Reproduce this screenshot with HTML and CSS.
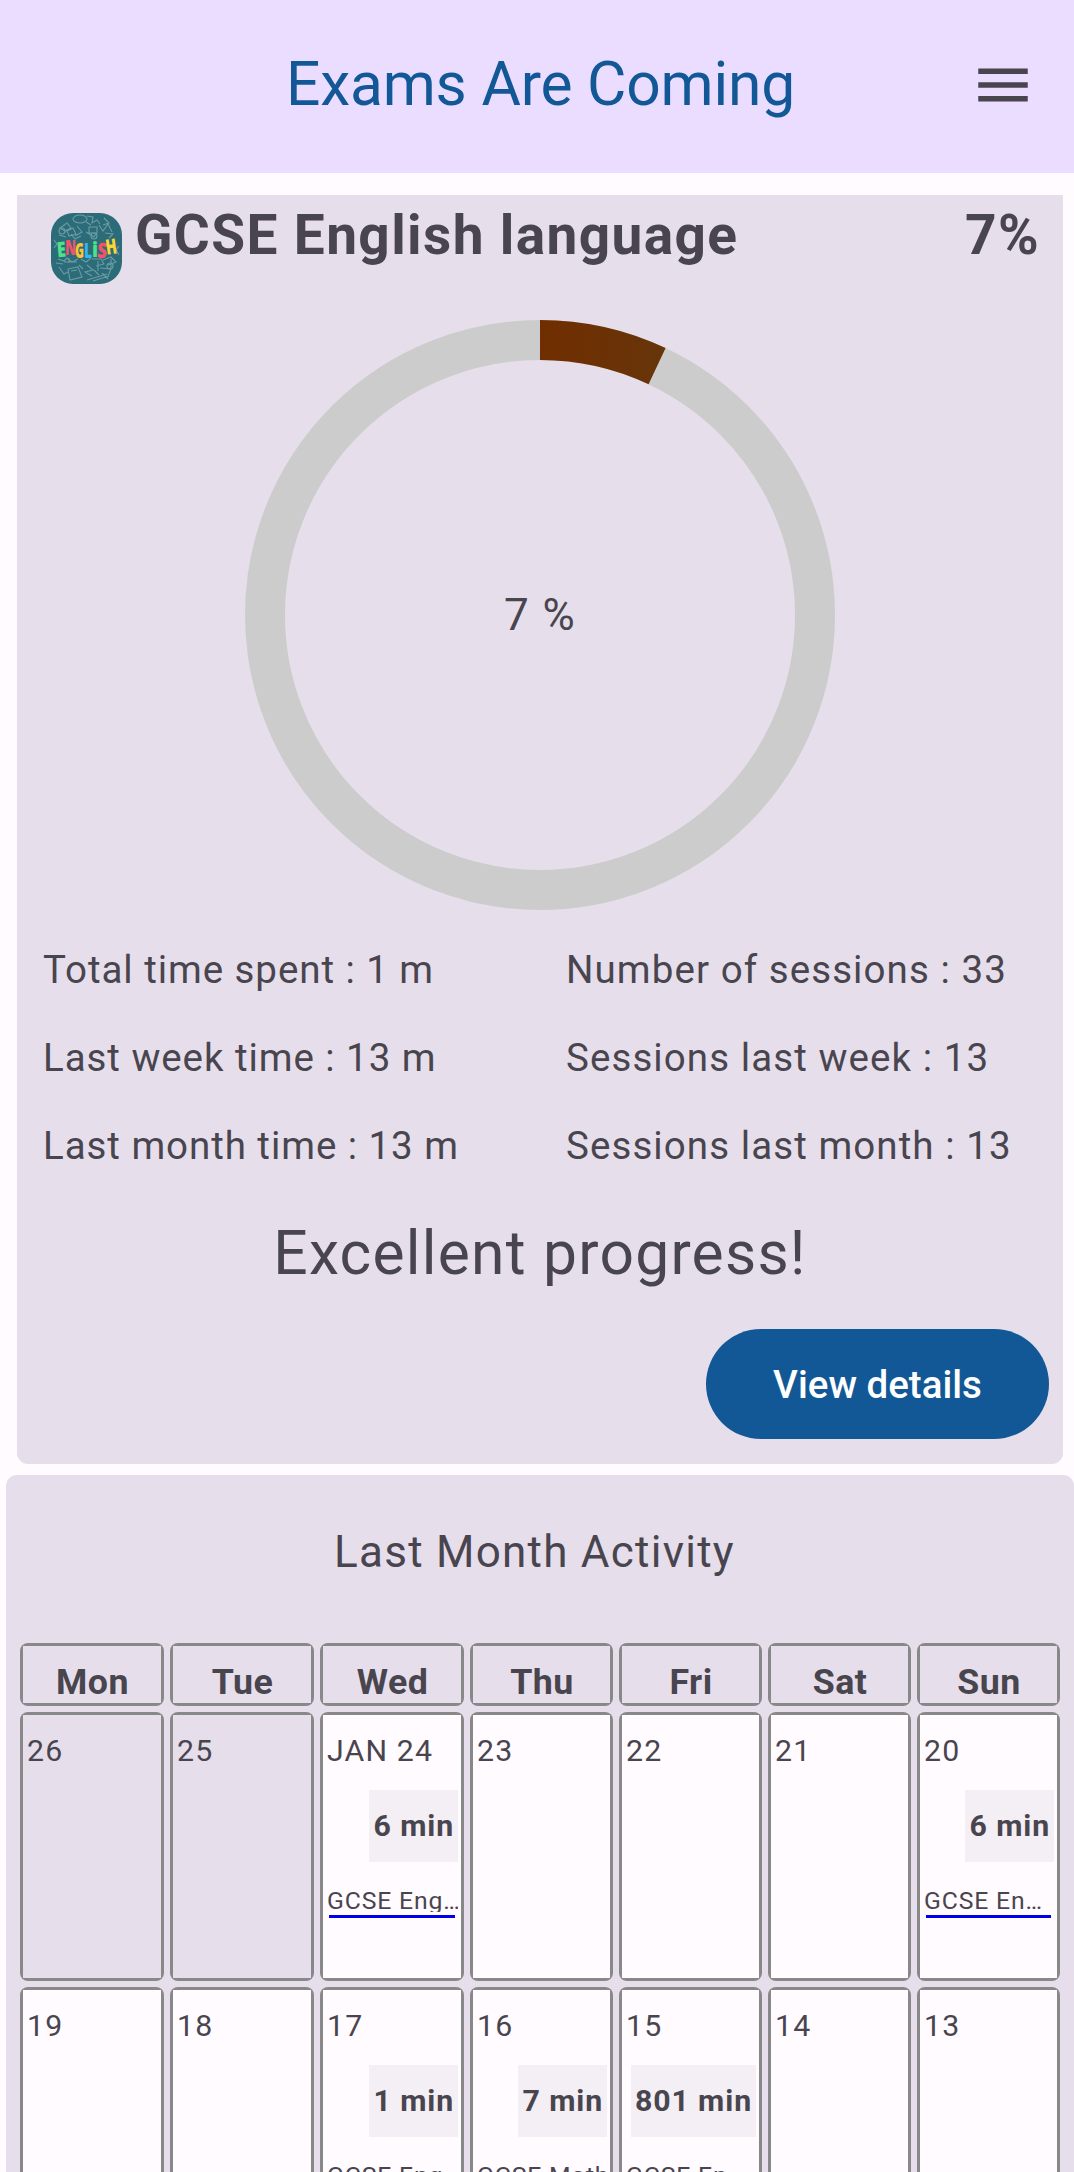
FILE: index.html
```html
<!DOCTYPE html>
<html lang="en">
<head>
  <title>Exams Are Coming</title>
  <meta charset="UTF-8">
  <link rel="stylesheet" href="styles.css">
</head>
<body>
  <header class="app-bar">
    <h1>Exams Are Coming</h1>
    <svg class="menu-icon" viewBox="0 0 24 24"><path d="M3 18h18v-2H3v2zm0-5h18v-2H3v2zm0-7v2h18V6H3z"/></svg>
  </header>

  <section class="card progress-card">
    <div class="subject-row">
      <svg class="subject-icon" viewBox="0 0 71 71">
        <rect width="71" height="71" rx="22" fill="#2b6c78"/>
        <!-- chalk doodles -->
        <g class="doodles">
          <ellipse cx="29" cy="6" rx="7" ry="4"/>
          <path d="M35 9l5 3M9 15l7-5 4 5-6 3zM16 18l6-3 3 6-7 2zM26 13l5 6-7 4M36 3l6 1-1 6 5-3 3 4M38 14h8v6h-8zM48 12l4 6 5-7 4 8M53 5l5 5-6 2M35 19l8 5 3-5M54 20l8 1-4 4M8 22l7 2M20 21l4 5 6-3"/>
          <path d="M3 27l3 4-3 4M68 33l-3 4 3 5M7 46l6 2 3-3 5 4 6-3M13 49h13M18 45v5M30 46l5 3 5-4M41 46h9l3 5-8 2M47 48v10M52 47l8-3 5 5-8 3M5 50l7 1M60 46v10"/>
          <path d="M17 56l10-2 4 10-12 3zM20 58l6-1M36 52l6 5-8 2 7 4M43 57l5 5M49 55l11 1-3 7M8 54l5 7 4-2M36 67l20-6M42 68l16-5M51 60l6 6M28 52l4 4"/>
          <circle cx="11" cy="18" r="3"/>
          <circle cx="43" cy="23" r="3"/>
          <circle cx="59" cy="53" r="3"/>
        </g>
        <g class="icon-word">
          <text x="6" y="44" fill="#4fe08a" textLength="9" lengthAdjust="spacingAndGlyphs" transform="rotate(-5 10 38)">E</text>
          <text x="14" y="42" fill="#f4516c" textLength="11" lengthAdjust="spacingAndGlyphs">N</text>
          <text x="24" y="45" fill="#fbc531" textLength="9" lengthAdjust="spacingAndGlyphs">G</text>
          <text x="33" y="45" fill="#35b8ee" textLength="8" lengthAdjust="spacingAndGlyphs">L</text>
          <text x="41" y="44" fill="#4fe08a" textLength="6" lengthAdjust="spacingAndGlyphs">i</text>
          <text x="46" y="45" fill="#f4516c" textLength="10" lengthAdjust="spacingAndGlyphs" transform="rotate(5 51 38)">S</text>
          <text x="55" y="41" fill="#fbd531" textLength="11" lengthAdjust="spacingAndGlyphs" transform="rotate(-8 60 36)">H</text>
        </g>
      </svg>
      <h2>GCSE English language</h2>
      <span class="subject-percent">7%</span>
    </div>

    <svg class="ring" viewBox="0 0 590 590">
      <defs>
        <linearGradient id="arc-color" gradientUnits="userSpaceOnUse" x1="295" y1="0" x2="420" y2="0">
          <stop offset="0" stop-color="#702e00"/>
          <stop offset="1" stop-color="#67350a"/>
        </linearGradient>
      </defs>
      <circle cx="295" cy="295" r="275" fill="none" stroke="#ccc" stroke-width="40"/>
      <!-- 7% of the circle = 25.2deg -->
      <path d="M295 20A275 275 0 0 1 412.1 46.2" fill="none" stroke="url(#arc-color)" stroke-width="40"/>
      <text x="295" y="310" text-anchor="middle">7 %</text>
    </svg>

    <div class="stats">
      <span>Total time spent : 1 m</span>
      <span>Number of sessions : 33</span>
      <span>Last week time : 13 m</span>
      <span>Sessions last week : 13</span>
      <span>Last month time : 13 m</span>
      <span>Sessions last month : 13</span>
    </div>

    <p class="message">Excellent progress!</p>
    <button class="details-button">View details</button>
  </section>

  <section class="card activity-card">
    <h3>Last Month Activity</h3>
    <div class="calendar">
      <div class="cell"><div class="weekday">Mon</div></div>
      <div class="cell"><div class="weekday">Tue</div></div>
      <div class="cell"><div class="weekday">Wed</div></div>
      <div class="cell"><div class="weekday">Thu</div></div>
      <div class="cell"><div class="weekday">Fri</div></div>
      <div class="cell"><div class="weekday">Sat</div></div>
      <div class="cell"><div class="weekday">Sun</div></div>

      <div class="cell"><div class="day outside">26</div></div>
      <div class="cell"><div class="day outside">25</div></div>
      <div class="cell">
        <div class="day">JAN 24
          <span class="minutes">6 min</span>
          <span class="subject">GCSE Eng…</span>
          <span class="line"></span>
        </div>
      </div>
      <div class="cell"><div class="day">23</div></div>
      <div class="cell"><div class="day">22</div></div>
      <div class="cell"><div class="day">21</div></div>
      <div class="cell">
        <div class="day">20
          <span class="minutes">6 min</span>
          <span class="subject">GCSE En…</span>
          <span class="line"></span>
        </div>
      </div>

      <div class="cell"><div class="day">19</div></div>
      <div class="cell"><div class="day">18</div></div>
      <div class="cell">
        <div class="day">17
          <span class="minutes">1 min</span>
          <span class="subject">GCSE Eng…</span>
          <span class="line"></span>
        </div>
      </div>
      <div class="cell">
        <div class="day">16
          <span class="minutes">7 min</span>
          <span class="subject">GCSE Math</span>
          <span class="line"></span>
        </div>
      </div>
      <div class="cell">
        <div class="day">15
          <span class="minutes">801 min</span>
          <span class="subject">GCSE En…</span>
          <span class="line"></span>
        </div>
      </div>
      <div class="cell"><div class="day">14</div></div>
      <div class="cell"><div class="day">13</div></div>
    </div>
  </section>
</body>
</html>
```
FILE: styles.css
```css
* {
  box-sizing: border-box;
}
html, body {
  height: 2172px;
  overflow: hidden;
}
body {
  margin: 0;
  background: #fffbff;
  color: #49454f;
  font-family: Roboto, sans-serif;
  letter-spacing: 1.375px;
}
h1, h2, h3, p {
  margin: 0;
  font-weight: 400;
}
.app-bar {
  display: flex;
  align-items: center;
  height: 173px;
  padding: 0 38px 4px 111px;
  background: #eaddff;
}
.app-bar h1 {
  flex: 1;
  color: #135896;
  font-size: 60.5px;
  letter-spacing: -0.2px;
  text-align: center;
}
.menu-icon {
  width: 66px;
  height: 66px;
  fill: #49454f;
}
.card {
  background: #e6dfeb;
}
.progress-card {
  display: flex;
  flex-direction: column;
  height: 1269px;
  margin: 22px 11px 0 17px;
  padding: 7px 14px 25px;
  border-radius: 0 0 11px 11px;
}
.subject-row {
  display: flex;
  align-items: flex-start;
  padding: 0 9px 0 20px;
}
.subject-row h2, .subject-percent {
  padding-top: 1px;
  font-size: 55px;
  font-weight: 700;
  line-height: 65px;
}
.subject-row h2 {
  flex: 1;
  margin-left: 13px;
}
.subject-icon {
  width: 71px;
  height: 71px;
  margin-top: 11px;
}
.doodles {
  fill: none;
  stroke: #6b9ba5;
  stroke-width: 1.1;
}
.icon-word {
  font-family: "Open Sans", Roboto, sans-serif;
  font-size: 21px;
  font-weight: 800;
  letter-spacing: 0;
}
.ring {
  align-self: center;
  width: 590px;
  height: 590px;
  margin-top: 36px;
}
.ring text {
  fill: #49454f;
  font-size: 44px;
}
.stats {
  display: grid;
  grid-template-columns: 523px 1fr;
  grid-auto-rows: 88px;
  align-items: center;
  margin-top: 15px;
  padding-left: 12px;
  font-size: 38.5px;
  letter-spacing: 1.08px;
  white-space: nowrap;
}
.stats span:nth-child(odd) {
  letter-spacing: 0.94px;
}
.message {
  margin-top: 29px;
  font-size: 60.5px;
  letter-spacing: 1.25px;
  line-height: 72px;
  text-align: center;
}
.details-button {
  align-self: flex-end;
  width: 343px;
  height: 110px;
  margin-top: 39px;
  padding: 0;
  border: none;
  border-radius: 55px;
  background: #135896;
  color: #fff;
  font: 500 38.5px Roboto, sans-serif;
  letter-spacing: 0;
}
.activity-card {
  height: 720px;
  margin: 11px 0 0 6px;
  padding: 51px 14px 0;
  border-radius: 11px 11px 0 0;
}
.activity-card h3 {
  padding-right: 11px;
  font-size: 44px;
  letter-spacing: 1.25px;
  line-height: 52px;
  text-align: center;
}
.calendar {
  display: grid;
  grid-template-columns: repeat(3, 144px) repeat(4, 143px);
  grid-template-rows: 63px 269px 269px;
  gap: 6px;
  margin-top: 65px;
}
/* the frame is the cell's own background, so the inside keeps square corners */
.cell {
  display: grid;
  min-width: 0;
  padding: 3px;
  border-radius: 8px;
  background: #888;
}
.weekday {
  padding: 15px 0 0 1px;
  background: #e6dfeb;
  font-size: 35.75px;
  font-weight: 700;
  letter-spacing: 0.5px;
  line-height: 42px;
  text-align: center;
}
.day {
  display: flex;
  flex-direction: column;
  min-width: 0;
  padding: 18px 3px 0 4px;
  background: #fffbff;
  font-size: 30.25px;
  letter-spacing: 1.15px;
  line-height: 36px;
}
.outside {
  background: #e6dfeb;
}
.minutes {
  align-self: flex-end;
  height: 72px;
  margin-top: 21px;
  padding: 0 4px;
  background: #f3eff4;
  font-weight: 700;
  letter-spacing: 0.9px;
  line-height: 72px;
  white-space: nowrap;
}
.subject {
  height: 22px;
  margin-top: 28px;
  overflow: hidden;
  font-size: 24.75px;
  letter-spacing: 0.85px;
  line-height: 22px;
  white-space: nowrap;
}
.line {
  height: 3px;
  margin: 3px 3px 0 2px;
  background: #0000e6;
}
```
